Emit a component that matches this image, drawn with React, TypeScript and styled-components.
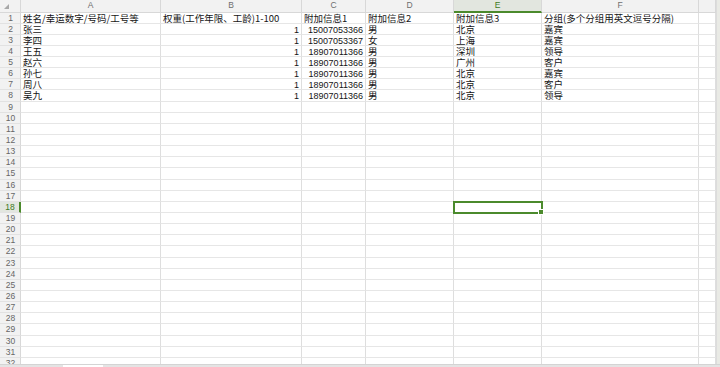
import React from "react";
import styled, { createGlobalStyle } from "styled-components";

const GlobalStyle = createGlobalStyle`
  html, body {
    margin: 0;
    padding: 0;
    width: 720px;
    height: 367px;
    overflow: hidden;
    background: #ffffff;
  }
  * {
    box-sizing: border-box;
  }
`;

const COLS = ["A", "B", "C", "D", "E", "F", ""];
const ROW_H = 11.15;
const ROW_COUNT = 32;
const ACTIVE_COL = 4;
const ACTIVE_ROW = 18;

const data: string[][] = [
  [
    "姓名/幸运数字/号码/工号等",
    "权重(工作年限、工龄)1-100",
    "附加信息1",
    "附加信息2",
    "附加信息3",
    "分组(多个分组用英文逗号分隔)",
  ],
  ["张三", "1", "15007053366", "男", "北京", "嘉宾"],
  ["李四", "1", "15007053367", "女", "上海", "嘉宾"],
  ["王五", "1", "18907011366", "男", "深圳", "领导"],
  ["赵六", "1", "18907011366", "男", "广州", "客户"],
  ["孙七", "1", "18907011366", "男", "北京", "嘉宾"],
  ["周八", "1", "18907011366", "男", "北京", "客户"],
  ["吴九", "1", "18907011366", "男", "北京", "领导"],
];

const Window = styled.div`
  width: 720px;
  height: 367px;
  display: flex;
  flex-direction: column;
  overflow: hidden;
  font-family: "Noto Sans CJK SC", "Liberation Sans", sans-serif;
`;

const Body = styled.div`
  flex: 1;
  display: flex;
  min-height: 0;
`;

const Sheet = styled.div`
  flex: 1;
  display: grid;
  grid-template-columns: 21px 140px 141px 64px 88px 88px 157px 1fr;
  grid-template-rows: 12.5px;
  grid-auto-rows: ${ROW_H}px;
  overflow: hidden;
  align-content: start;
`;

const VScroll = styled.div`
  width: 4px;
  background: #e9eae5;
  border-left: 1px solid #dcdcdc;
`;

const HScroll = styled.div`
  height: 3px;
  display: flex;
  background: #e4e4e4;
  border-top: 1px solid #d4d4d4;
`;

const ScrollThumb = styled.div`
  margin-left: 63px;
  width: 40px;
  background: #ffffff;
`;

const Corner = styled.div`
  background: #f2f2f2;
  border-right: 1px solid #d8d8d8;
  border-bottom: 1px solid #d8d8d8;
  display: flex;
  align-items: flex-start;
  padding: 4px 0 0 4px;
`;

const ColHead = styled.div<{ $active?: boolean }>`
  background: ${(p) => (p.$active ? "#e2e6df" : "#f2f2f2")};
  border-right: 1px solid #d8d8d8;
  border-bottom: ${(p) => (p.$active ? "2px solid #4b8a2c" : "1px solid #d8d8d8")};
  color: ${(p) => (p.$active ? "#3d7a22" : "#6e6e6e")};
  font-family: "Liberation Sans", sans-serif;
  font-size: 8.5px;
  line-height: 11px;
  text-align: center;
`;

const RowHead = styled.div<{ $active?: boolean }>`
  background: ${(p) => (p.$active ? "#e2e6df" : "#f2f2f2")};
  border-right: ${(p) => (p.$active ? "2px solid #4b8a2c" : "1px solid #d8d8d8")};
  border-bottom: 1px solid #e2e2e2;
  color: ${(p) => (p.$active ? "#3d7a22" : "#666666")};
  font-family: "Liberation Sans", sans-serif;
  font-size: 8.5px;
  line-height: ${ROW_H - 1}px;
  text-align: center;
  padding-left: 1px;
`;

const Cell = styled.div<{ $align?: "left" | "right"; $selected?: boolean }>`
  position: relative;
  border-right: 1px solid #dedede;
  border-bottom: 1px solid #e6e6e6;
  padding: 0 2px;
  font-size: 9.5px;
  line-height: ${ROW_H - 1}px;
  color: #151515;
  text-align: ${(p) => p.$align ?? "left"};
  white-space: nowrap;
  ${(p) =>
    p.$selected &&
    `
    z-index: 1;
    outline: 2px solid #4b8a2c;
    outline-offset: -1px;
    &::after {
      content: "";
      position: absolute;
      right: -3px;
      bottom: -3px;
      width: 4px;
      height: 4px;
      background: #4b8a2c;
      border: 1px solid #ffffff;
    }
  `}
`;

const Num = styled.span`
  font-family: "Liberation Sans", sans-serif;
  font-size: 9px;
`;

const isNumeric = (s: string) => /^[0-9]+$/.test(s);

export default function App() {
  const rows = Array.from({ length: ROW_COUNT }, (_, i) => i + 1);
  return (
    <Window>
      <GlobalStyle />
      <Body>
        <Sheet>
          <Corner>
            <svg width="5" height="5" viewBox="0 0 5 5">
              <polygon points="5,0 5,5 0,5" fill="#a8a8a8" />
            </svg>
          </Corner>
          {COLS.map((c, i) => (
            <ColHead key={i} $active={i === ACTIVE_COL}>
              {c}
            </ColHead>
          ))}
          {rows.map((r) => (
            <React.Fragment key={r}>
              <RowHead $active={r === ACTIVE_ROW}>{r}</RowHead>
              {COLS.map((_, ci) => {
                const v = data[r - 1]?.[ci] ?? "";
                const num = r > 1 && isNumeric(v);
                return (
                  <Cell
                    key={ci}
                    $align={num ? "right" : "left"}
                    $selected={r === ACTIVE_ROW && ci === ACTIVE_COL}
                  >
                    {num ? <Num>{v}</Num> : v}
                  </Cell>
                );
              })}
            </React.Fragment>
          ))}
        </Sheet>
        <VScroll />
      </Body>
      <HScroll>
        <ScrollThumb />
      </HScroll>
    </Window>
  );
}
